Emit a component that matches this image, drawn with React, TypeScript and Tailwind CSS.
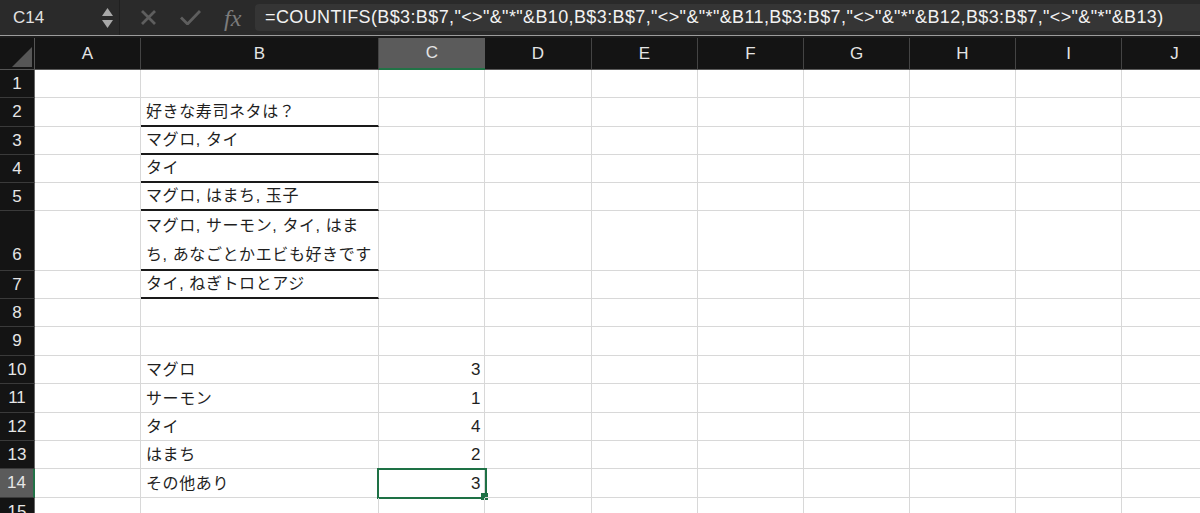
import React from 'react';

const COLS = ['A', 'B', 'C', 'D', 'E', 'F', 'G', 'H', 'I', 'J'];
const COL_W = [
  'w-[106px]',
  'w-[238px]',
  'w-[106px]',
  'w-[107px]',
  'w-[106px]',
  'w-[106px]',
  'w-[106px]',
  'w-[106px]',
  'w-[106px]',
  'w-[106px]',
];

type Row = { n: number; h: string; b?: React.ReactNode; c?: string; line?: boolean; tall?: boolean };

const ROWS: Row[] = [
  { n: 1, h: 'h-[28px]' },
  { n: 2, h: 'h-[29px]', b: '好きな寿司ネタは？', line: true },
  { n: 3, h: 'h-[28px]', b: 'マグロ, タイ', line: true },
  { n: 4, h: 'h-[28px]', b: 'タイ', line: true },
  { n: 5, h: 'h-[28px]', b: 'マグロ, はまち, 玉子', line: true },
  {
    n: 6,
    h: 'h-[60px]',
    b: (
      <>
        マグロ, サーモン, タイ, はま
        <br />
        ち, あなごとかエビも好きです
      </>
    ),
    line: true,
    tall: true,
  },
  { n: 7, h: 'h-[28px]', b: 'タイ, ねぎトロとアジ', line: true },
  { n: 8, h: 'h-[28px]' },
  { n: 9, h: 'h-[29px]' },
  { n: 10, h: 'h-[28px]', b: 'マグロ', c: '3' },
  { n: 11, h: 'h-[29px]', b: 'サーモン', c: '1' },
  { n: 12, h: 'h-[28px]', b: 'タイ', c: '4' },
  { n: 13, h: 'h-[28px]', b: 'はまち', c: '2' },
  { n: 14, h: 'h-[29px]', b: 'その他あり', c: '3' },
  { n: 15, h: 'h-[28px]' },
];

const FORMULA =
  '=COUNTIFS(B$3:B$7,"<>"&"*"&B10,B$3:B$7,"<>"&"*"&B11,B$3:B$7,"<>"&"*"&B12,B$3:B$7,"<>"&"*"&B13)';

export default function App() {
  return (
    <div className="w-[1200px] h-[513px] overflow-hidden bg-white font-['Liberation_Sans','Noto_Sans_CJK_JP',sans-serif]">
      {/* formula bar */}
      <div className="flex h-[35px] bg-[#2a2a2a]">
        <div className="flex w-[119px] shrink-0 items-center justify-between pl-[13px] pr-[6px] text-[17px] text-[#e2e2e2]">
          <span>C14</span>
          <div className="flex flex-col items-center gap-[4px]">
            <svg width="11" height="8" viewBox="0 0 11 8">
              <path d="M5.5 0 L11 8 L0 8 Z" fill="#a8a8a8" />
            </svg>
            <svg width="11" height="8" viewBox="0 0 11 8">
              <path d="M0 0 L11 0 L5.5 8 Z" fill="#a8a8a8" />
            </svg>
          </div>
        </div>
        <div className="w-px shrink-0 bg-[#202020]" />
        <div className="flex w-[135px] shrink-0 items-center pl-[21px]">
          <svg width="15" height="15" viewBox="0 0 15 15">
            <path d="M1 1 L14 14 M14 1 L1 14" stroke="#5e5e5e" strokeWidth="2.8" />
          </svg>
          <svg className="ml-[24px]" width="21" height="15" viewBox="0 0 21 15">
            <path d="M1 7.5 L7.5 14 L20 1" stroke="#5e5e5e" strokeWidth="2.8" fill="none" />
          </svg>
          <span className="ml-[23px] font-['Liberation_Serif',serif] text-[24px] italic leading-none text-[#7c7c7c]">
            fx
          </span>
        </div>
        <div className="my-[4px] flex flex-1 items-center overflow-hidden rounded-l-[4px] bg-[#353535] pl-[10px] text-[18px] tracking-[0.38px] whitespace-nowrap text-[#f2f2f2]">
          {FORMULA}
        </div>
      </div>
      <div className="h-px bg-[#9c9c9c]" />
      <div className="h-[2px] bg-[#1c1c1c]" />

      {/* column headers */}
      <div className="flex h-[32px] bg-[#141414]">
        <div className="relative w-[35px] shrink-0 border-r border-b border-[#555]">
          <svg className="absolute right-[2px] bottom-[2px]" width="20" height="20" viewBox="0 0 20 20">
            <path d="M20 0 L20 20 L0 20 Z" fill="#565656" />
          </svg>
        </div>
        {COLS.map((c, i) => (
          <div
            key={c}
            className={`${COL_W[i]} flex shrink-0 items-center justify-center text-[17px] text-[#e4e4e4] ${
              c === 'C'
                ? 'border-b-2 border-b-[#217346] bg-[#5b5b5b]'
                : 'border-r border-b border-r-[#444] border-b-[#5a5a5a]'
            }`}
          >
            {c}
          </div>
        ))}
      </div>

      {/* rows */}
      {ROWS.map((r) => (
        <div key={r.n} className={`flex ${r.h}`}>
          <div
            className={`flex w-[35px] shrink-0 justify-center text-[17px] text-[#e6e6e6] ${
              r.n === 14
                ? 'border-r-2 border-b border-r-[#217346] border-b-[#3a3a3a] bg-[#5b5b5b]'
                : 'border-r border-b border-r-[#666] border-b-[#3a3a3a] bg-[#141414]'
            } ${r.tall ? 'items-end pb-[3px]' : 'items-center'}`}
          >
            {r.n}
          </div>
          {COLS.map((c, i) => {
            const isB = c === 'B';
            const isC = c === 'C';
            return (
              <div
                key={c}
                className={`${COL_W[i]} relative flex shrink-0 items-end border-r border-r-[#d8d8d8] ${
                  isB && r.line ? 'border-b-2 border-b-[#1a1a1a]' : 'border-b border-b-[#d8d8d8]'
                } ${isC ? 'justify-end pr-[3px]' : 'pl-[5px]'} text-[16px] tracking-[0.6px] text-[#1f1f1f]`}
              >
                {isB && r.b && (
                  <span className={r.tall ? 'leading-[29px]' : 'pb-[1px] leading-[24px]'}>{r.b}</span>
                )}
                {isC && r.c && <span className="pb-[1px] text-[17px] leading-[24px]">{r.c}</span>}
                {isC && r.n === 14 && (
                  <>
                    <div className="absolute -top-[1px] -left-[2px] h-[31px] w-[110px] border-2 border-[#1e7145]" />
                    <div className="absolute -right-[4px] -bottom-[3px] h-[7px] w-[7px] bg-[#1e7145]" />
                  </>
                )}
              </div>
            );
          })}
        </div>
      ))}
    </div>
  );
}
